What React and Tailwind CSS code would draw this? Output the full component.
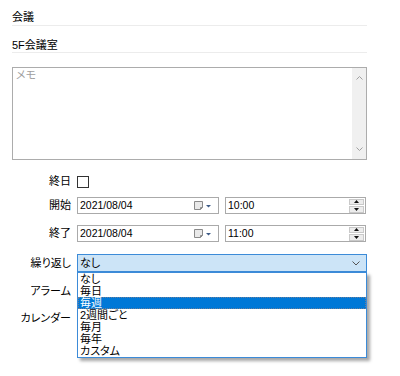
import React from "react";

function CalIcon() {
  return (
    <svg width="19" height="10" viewBox="0 0 19 10" className="mr-[5px]">
      <path d="M0.5 0.5 H8.5 V6.5 L6.5 8.5 H0.5 Z" fill="#e9e9e9" stroke="#8a8a8a" />
      <path d="M8.5 6.5 H6.5 V8.5" fill="none" stroke="#8a8a8a" />
      <path d="M12 4 H17 L14.5 6.5 Z" fill="#3d5a86" />
    </svg>
  );
}

function Spinner() {
  return (
    <div className="mr-[1px] flex h-[14px] w-[15px] flex-col gap-[1px]">
      <div className="flex h-[6.5px] items-center justify-center border border-[#c9c9c9] bg-[#ececec]">
        <svg width="5" height="3" viewBox="0 0 5 3">
          <path d="M0 3 L2.5 0 L5 3 Z" fill="#111" />
        </svg>
      </div>
      <div className="flex h-[6.5px] items-center justify-center border border-[#c9c9c9] bg-[#ececec]">
        <svg width="5" height="3" viewBox="0 0 5 3">
          <path d="M0 0 L5 0 L2.5 3 Z" fill="#111" />
        </svg>
      </div>
    </div>
  );
}

function DateBox({ value }) {
  return (
    <div className="flex h-[17px] w-[142px] items-center border border-[#aaaaaa] bg-white pl-[2px]">
      <span className="flex-1 text-[10.5px] leading-[15px]">{value}</span>
      <CalIcon />
    </div>
  );
}

function TimeBox({ value }) {
  return (
    <div className="ml-[6px] flex h-[17px] w-[141px] items-center border border-[#aaaaaa] bg-white pl-[2px]">
      <span className="flex-1 text-[10.5px] leading-[15px]">{value}</span>
      <Spinner />
    </div>
  );
}

const items = ["なし", "毎日", "毎週", "2週間ごと", "毎月", "毎年", "カスタム"];

export default function App() {
  return (
    <div className="relative h-[376px] w-[400px] overflow-hidden bg-white text-[11px] text-black [font-family:'Liberation_Sans','Noto_Sans_CJK_JP',sans-serif] [font-feature-settings:'palt']">
      <div className="ml-[12px] w-[355px]">
        <div className="h-[26px] border-b border-[#ececec] pt-[10px] leading-[15px]">会議</div>
        <div className="h-[27px] border-b border-[#ececec] pt-[12px] leading-[15px]">5F会議室</div>

        <div className="mt-[14px] flex h-[93px] border border-[#acacac] bg-white">
          <div className="flex-1 pl-[3px] pt-[1px] leading-[13px] text-[#a0a0a0]">メモ</div>
          <div className="flex w-[14px] flex-col items-center justify-between bg-[#f0f0f0] py-[8px]">
            <svg width="7" height="4" viewBox="0 0 7 4">
              <path d="M0.5 3.5 L3.5 0.5 L6.5 3.5" fill="none" stroke="#a0a0a0" strokeWidth="1" />
            </svg>
            <svg width="7" height="4" viewBox="0 0 7 4">
              <path d="M0.5 0.5 L3.5 3.5 L6.5 0.5" fill="none" stroke="#a0a0a0" strokeWidth="1" />
            </svg>
          </div>
        </div>

        <div className="flex flex-col">
          <div className="mt-[15px] flex h-[13px] items-center">
            <div className="w-[60px] pr-[1px] text-right leading-[13px]">終日</div>
            <div className="ml-[5px] h-[12px] w-[12px] border border-[#333333] bg-white" />
          </div>

          <div className="mt-[9px] flex h-[17px] items-center">
            <div className="w-[60px] pr-[1px] text-right leading-[13px]">開始</div>
            <div className="ml-[5px] flex">
              <DateBox value="2021/08/04" />
              <TimeBox value="10:00" />
            </div>
          </div>

          <div className="mt-[11px] flex h-[17px] items-center">
            <div className="w-[60px] pr-[1px] text-right leading-[13px]">終了</div>
            <div className="ml-[5px] flex">
              <DateBox value="2021/08/04" />
              <TimeBox value="11:00" />
            </div>
          </div>

          <div className="mt-[12px] flex h-[18px] items-center">
            <div className="w-[60px] pr-[1px] text-right leading-[13px]">繰り返し</div>
            <div className="relative ml-[5px] h-[18px] w-[290px]">
              <div className="flex h-[18px] items-center border border-[#3c8bd8] bg-[#cce4f7] pl-[2px]">
                <span className="flex-1 leading-[14px]">なし</span>
                <svg width="8" height="5" viewBox="0 0 8 5" className="mr-[6px]">
                  <path d="M0.5 0.5 L4 4 L7.5 0.5" fill="none" stroke="#555" strokeWidth="1" />
                </svg>
              </div>
              <div className="absolute left-0 top-[18px] z-10 w-[290px] border border-[#3c8bd8] bg-white shadow-[3px_3px_3px_rgba(0,0,0,0.35)]">
                {items.map((it) => (
                  <div
                    key={it}
                    className={
                      it === "毎週"
                        ? "h-[12px] border border-dotted border-[#6b7f99] bg-[#0078d7] pl-[1px] text-[11px] leading-[10px] text-white"
                        : "h-[12px] pl-[2px] text-[11px] leading-[12px]"
                    }
                  >
                    {it}
                  </div>
                ))}
              </div>
            </div>
          </div>

          <div className="mt-[11px] flex h-[17px] items-center">
            <div className="w-[60px] pr-[1px] text-right leading-[13px]">アラーム</div>
          </div>

          <div className="mt-[10px] flex h-[17px] items-center">
            <div className="w-[60px] pr-[1px] text-right leading-[13px]">カレンダー</div>
          </div>
        </div>
      </div>
    </div>
  );
}
